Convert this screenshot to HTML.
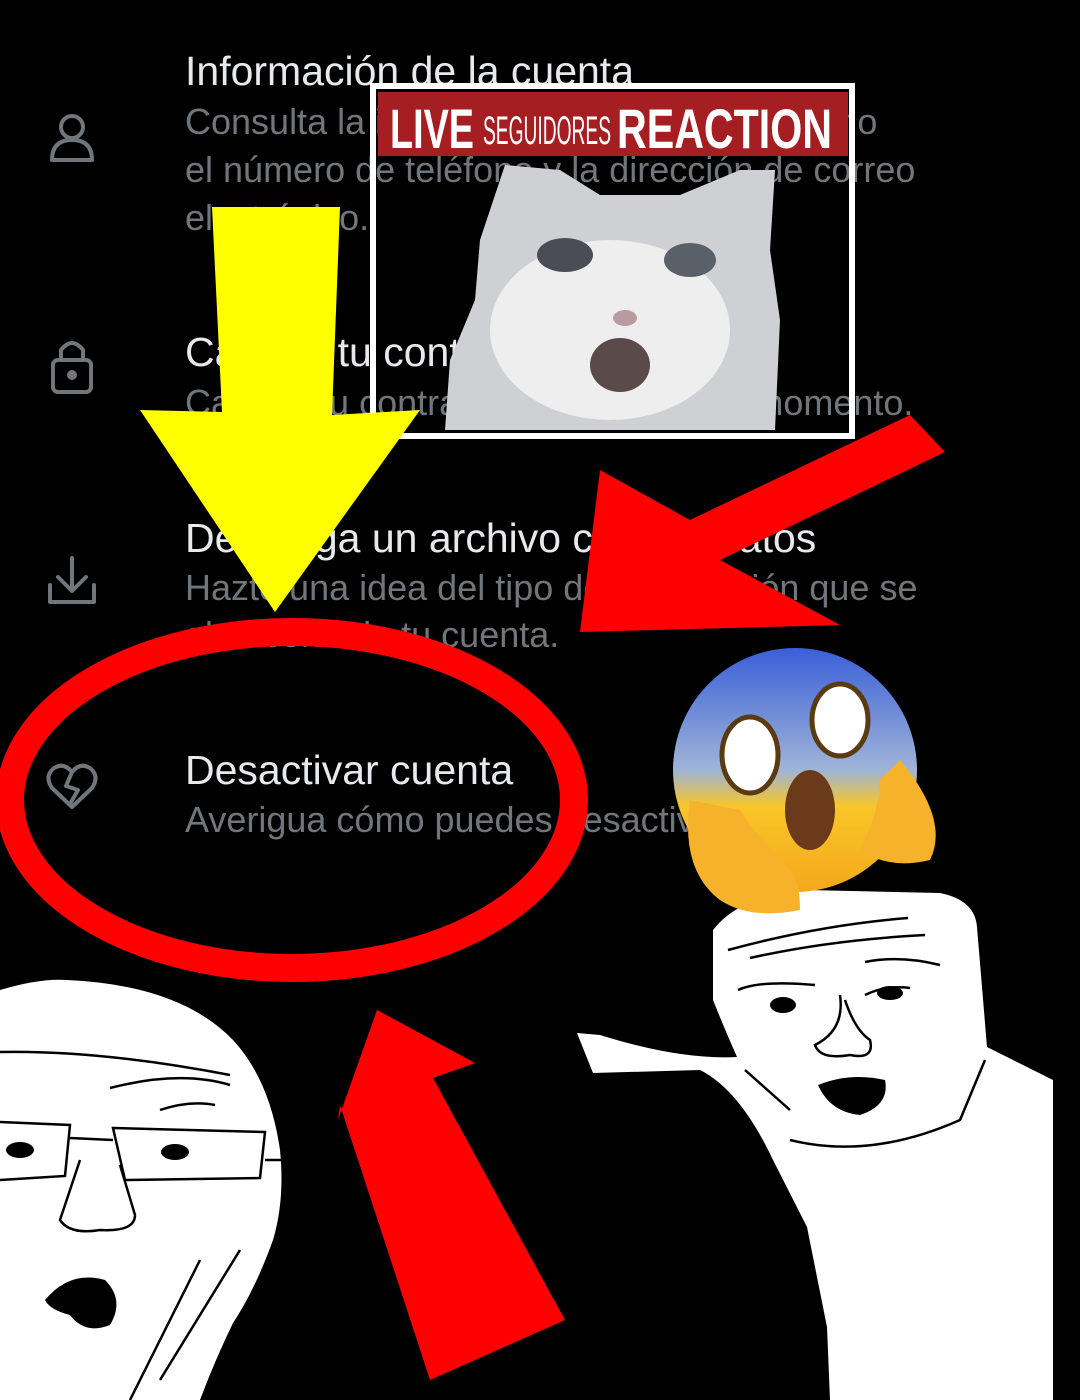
<!DOCTYPE html>
<html><head><meta charset="utf-8"><style>
html,body{margin:0;padding:0;background:#000;}
body{width:1080px;height:1400px;position:relative;overflow:hidden;font-family:"Liberation Sans",sans-serif;}
.t{position:absolute;left:185px;font-size:41px;color:#e7e9ea;white-space:nowrap;line-height:48px;}
.s{position:absolute;left:185px;font-size:36px;color:#71767b;white-space:nowrap;line-height:48px;}
svg{position:absolute;left:0;top:0;}
</style></head><body>
<div class="t" style="top:47px">Información de la cuenta</div>
<div class="s" style="top:98px">Consulta la información de tu cuenta, como</div>
<div class="s" style="top:146px">el número de teléfono y la dirección de correo</div>
<div class="s" style="top:194px">electrónico.</div>
<div class="t" style="top:328px">Cambia tu contraseña</div>
<div class="s" style="top:379px">Cambia tu contraseña en cualquier momento.</div>
<div class="t" style="top:514px">Descarga un archivo con tus datos</div>
<div class="s" style="top:564px">Hazte una idea del tipo de información que se</div>
<div class="s" style="top:611px">almacena de tu cuenta.</div>
<div class="t" style="top:746px">Desactivar cuenta</div>
<div class="s" style="top:796px">Averigua cómo puedes desactivar tu cuenta.</div>

<svg width="1080" height="1400" viewBox="0 0 1080 1400">
<g fill="none" stroke="#71767b" stroke-width="4" stroke-linecap="round" stroke-linejoin="round">
<circle cx="72" cy="127" r="11"/><path d="M52 160 Q52 140 72 140 Q92 140 92 160 Z"/>
<rect x="53" y="360" width="38" height="32" rx="5"/><path d="M61 360 V350 Q72 336 83 350 V360"/><circle cx="72" cy="375" r="3" fill="#71767b"/>
<path d="M72 558 V590 M58 577 L72 591 L86 577 M50 585 V602 H94 V585"/>
<path d="M72 807 L52 788 Q44 776 54 768 Q64 762 72 772 Q80 762 90 768 Q100 776 92 788 Z M72 772 L66 786 L78 790 L70 804"/>
</g>
<!-- overlay box -->
<rect x="373" y="86" width="479" height="350" fill="none" stroke="#fff" stroke-width="6"/>
<rect x="378" y="92" width="470" height="64" fill="#a51e22"/>
<text x="390" y="148" fill="#fff" font-family="Liberation Sans" font-weight="bold" font-size="56" textLength="84" lengthAdjust="spacingAndGlyphs">LIVE</text>
<text x="483" y="144" fill="#fff" font-family="Liberation Sans" font-size="40" textLength="128" lengthAdjust="spacingAndGlyphs">SEGUIDORES</text>
<text x="617" y="148" fill="#fff" font-family="Liberation Sans" font-weight="bold" font-size="56" textLength="215" lengthAdjust="spacingAndGlyphs">REACTION</text>
<!-- cat -->
<path d="M505 165 L560 170 L600 195 L680 195 L740 170 L775 170 L770 250 L780 320 L775 430 L445 430 L450 360 L475 300 L480 240 Z" fill="#cfd0d4"/>
<ellipse cx="610" cy="330" rx="120" ry="90" fill="#eeeeef"/>
<ellipse cx="565" cy="255" rx="28" ry="17" fill="#4a4d55"/>
<ellipse cx="690" cy="260" rx="26" ry="17" fill="#5a6068"/>
<ellipse cx="625" cy="318" rx="12" ry="8" fill="#b89aa0"/>
<ellipse cx="620" cy="365" rx="30" ry="27" fill="#5a4a4a"/>
<!-- yellow arrow -->
<polygon points="212,207 340,207 332,415 420,410 275,612 140,410 222,412" fill="#ffff00"/>
<!-- red arrow left-down -->
<polygon points="910,415 945,452 720,560 840,625 580,632 600,470 690,520" fill="#ff0000"/>
<!-- ellipse -->
<ellipse cx="292" cy="800" rx="282" ry="168" fill="none" stroke="#ff0000" stroke-width="28"/>
<!-- red up arrow -->
<polygon points="377,1010 475,1063 433,1078 565,1320 430,1380 340,1105 338,1120" fill="#ff0000"/>
<!-- left wojak -->
<path d="M0 990 Q40 978 67 980 Q180 985 233 1040 Q270 1080 280 1150 Q285 1200 273 1240 Q255 1290 233 1323 Q215 1360 200 1400 L0 1400 Z" fill="#fff"/>
<g fill="none" stroke="#000" stroke-width="2.5">
<path d="M0 1052 Q100 1050 230 1075 M110 1088 Q180 1070 230 1085 M160 1110 Q190 1100 215 1105"/>
<path d="M0 1122 L70 1125 L65 1176 L0 1180 M113 1128 L265 1132 L260 1178 L125 1180 Z M70 1138 L113 1140 M265 1160 L285 1160"/>
<path d="M80 1160 L60 1220 Q70 1235 100 1230 Q135 1232 135 1215 L120 1165"/>
<path d="M240 1250 L160 1380 M200 1260 L130 1400"/>
</g>
<ellipse cx="20" cy="1150" rx="14" ry="8" fill="#000"/><ellipse cx="175" cy="1152" rx="14" ry="8" fill="#000"/>
<path d="M45 1300 Q70 1270 105 1280 Q125 1300 110 1325 Q85 1335 70 1315 Q50 1310 45 1300 Z" fill="#000"/>
<!-- right wojak -->
<path d="M713 930 Q740 895 807 890 L940 893 Q975 900 977 927 L987 1047 L1053 1080 L1053 1400 L830 1400 L827 1327 L807 1227 L773 1160 Q740 1090 700 1070 L593 1073 L577 1033 L600 1035 Q680 1060 737 1057 Q725 1030 713 1000 Z" fill="#fff"/>
<g fill="none" stroke="#000" stroke-width="2.5">
<path d="M728 950 Q820 925 908 918 M750 958 Q830 940 925 935 M865 962 Q900 955 940 965"/>
<path d="M738 990 Q760 980 815 985 M865 995 Q885 985 910 988"/>
<path d="M840 995 Q845 1030 815 1045 Q820 1060 850 1055 Q875 1060 870 1040 Q855 1030 845 1000"/>
<path d="M745 1070 L790 1110 M790 1140 Q870 1160 960 1120 L985 1060"/>
</g>
<ellipse cx="783" cy="1005" rx="13" ry="8" fill="#000"/><ellipse cx="890" cy="993" rx="13" ry="7" fill="#000"/>
<path d="M818 1085 Q850 1072 885 1080 Q890 1105 860 1115 Q830 1112 818 1085 Z" fill="#000"/>
<!-- emoji -->
<defs><linearGradient id="g" x1="0" y1="0" x2="0" y2="1"><stop offset="0" stop-color="#3a5fd8"/><stop offset="0.5" stop-color="#9fb4d8"/><stop offset="0.65" stop-color="#f8c628"/><stop offset="1" stop-color="#f4a81a"/></linearGradient></defs>
<circle cx="795" cy="770" r="122" fill="url(#g)"/>
<ellipse cx="750" cy="755" rx="28" ry="38" fill="#fff" stroke="#5a3a10" stroke-width="5"/>
<ellipse cx="840" cy="720" rx="28" ry="36" fill="#fff" stroke="#5a3a10" stroke-width="5"/>
<ellipse cx="810" cy="810" rx="25" ry="40" fill="#6b3a1a"/>
<path d="M690 800 Q680 870 720 900 Q750 920 800 910 Q800 880 790 870 Q760 840 740 810 Z" fill="#f6b22a"/>
<path d="M900 760 Q950 820 930 860 Q890 870 860 850 Q880 810 880 780 Z" fill="#f6b22a"/>
</svg>
</body></html>
